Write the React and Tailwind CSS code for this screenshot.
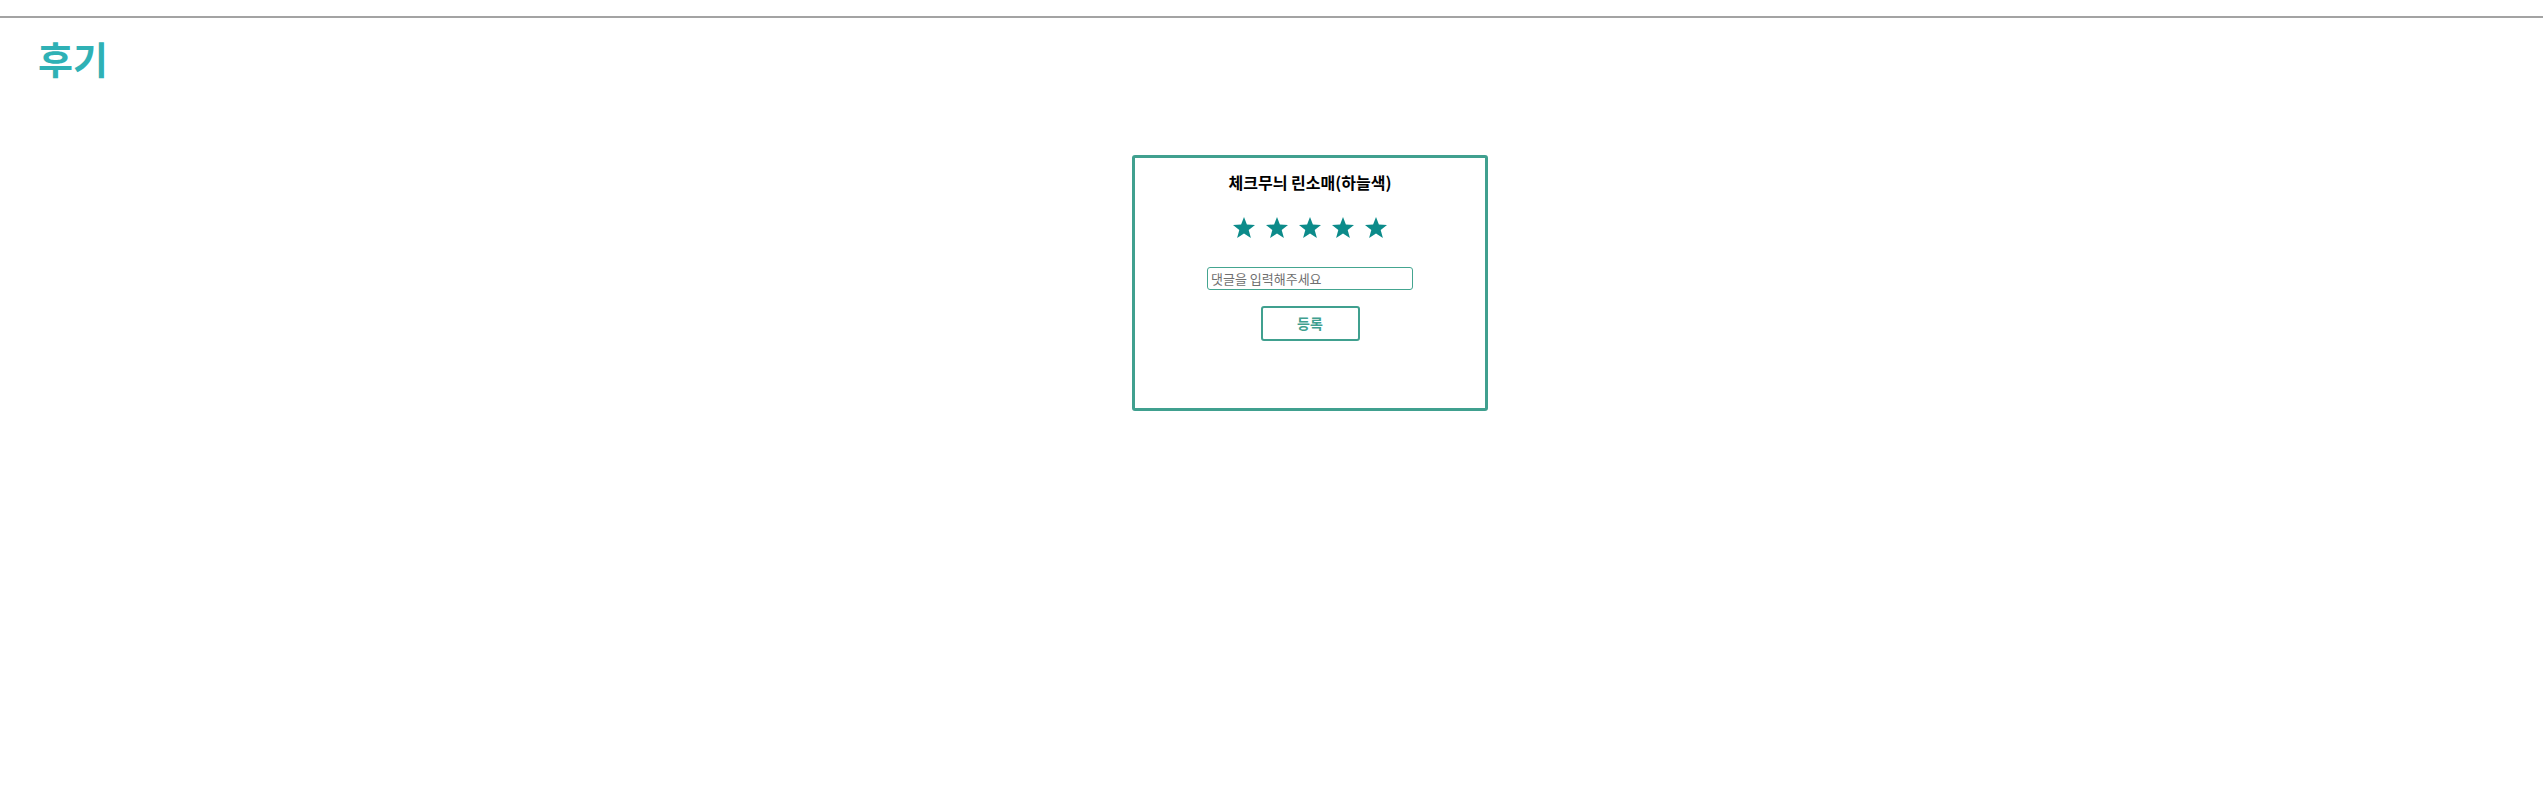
import React from "react";

const Star = () => (
  <svg width="22" height="21" viewBox="1 0.8 22 21" className="block">
    <path
      d="M12 0.8 L14.9 8.3 L23 8.7 L16.7 13.8 L18.9 21.7 L12 17.2 L5.1 21.7 L7.3 13.8 L1 8.7 L9.1 8.3 Z"
      fill="#0c8b8a"
    />
  </svg>
);

export default function App() {
  return (
    <div
      className="min-h-screen bg-white"
      style={{ fontFamily: '"Noto Sans CJK KR", "Noto Sans", sans-serif' }}
    >
      <div className="h-4" />
      <div className="border-t-2 border-[#a3a3a3]" />
      <h1 className="pl-[38px] pt-[21px] text-[38px] font-bold leading-none text-[#2fb1b5]">
        후기
      </h1>
      <div className="mt-[78px] ml-[1132px] w-[356px] h-[256px] rounded-[3px] border-[3px] border-[#40a08f] flex flex-col items-center pt-[12px]">
        <div className="text-[16px] font-bold leading-6 text-black">
          체크무늬 린소매(하늘색)
        </div>
        <div className="mt-[23px] flex gap-[11px]">
          <Star />
          <Star />
          <Star />
          <Star />
          <Star />
        </div>
        <input
          className="mt-[29px] w-[206px] h-[23px] rounded-[3px] border border-[#44a590] px-[3px] text-[13px] outline-none placeholder:text-[#6f6f6f]"
          placeholder="댓글을 입력해주세요"
        />
        <button className="mt-[16px] w-[99px] h-[35px] rounded-[3px] border-2 border-[#40a08f] bg-white text-[14px] font-bold text-[#40a08f]">
          등록
        </button>
      </div>
    </div>
  );
}
